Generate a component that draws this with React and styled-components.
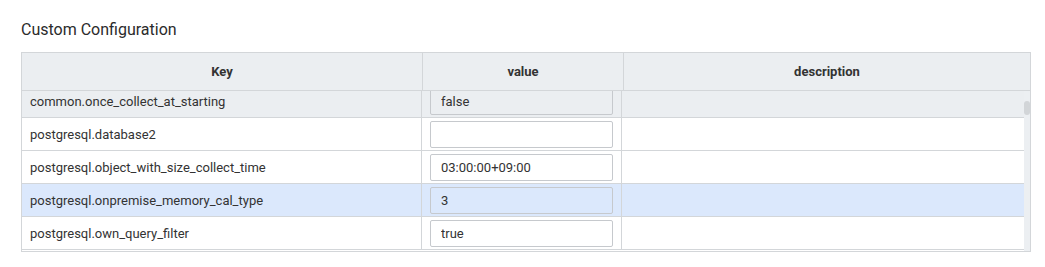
import React from 'react';
import styled, { createGlobalStyle } from 'styled-components';

const GlobalStyle = createGlobalStyle`
  body {
    margin: 0;
    background: #ffffff;
    font-family: Roboto, 'Liberation Sans', sans-serif;
    color: #333333;
  }
`;

const Page = styled.div`
  padding: 20px 15px 0 21px;
`;

const Title = styled.h3`
  margin: 0 0 13px;
  font-size: 16px;
  line-height: 19px;
  font-weight: 400;
  color: #2b2b2b;
`;

const Table = styled.div`
  width: 1008px;
  border: 1px solid #d3d6d9;
  background: #ffffff;
`;

const HeaderRow = styled.div`
  display: flex;
  height: 37px;
  background: #ebeef1;
  border-bottom: 1px solid #d3d6d9;
`;

const HeaderCell = styled.div`
  width: ${p => (p.$w ? `${p.$w}px` : 'auto')};
  flex: ${p => (p.$w ? 'none' : '1')};
  display: flex;
  align-items: center;
  justify-content: center;
  font-size: 13px;
  font-weight: 700;
  color: #333333;
  border-right: ${p => (p.$last ? 'none' : '1px solid #d3d6d9')};
`;

const Body = styled.div`
  display: flex;
  height: 160px;
  overflow: hidden;
`;

const Rows = styled.div`
  flex: 1;
  min-width: 0;
  overflow: hidden;
  background: #ffffff;
`;

const RowsInner = styled.div`
  margin-top: -6px;
`;

const Row = styled.div`
  display: flex;
  height: 32px;
  border-bottom: 1px solid #d3d6d9;
  background: ${p => p.$bg || '#ffffff'};
`;

const Cell = styled.div`
  width: ${p => (p.$w ? `${p.$w}px` : 'auto')};
  flex: ${p => (p.$w ? 'none' : '1')};
  display: flex;
  align-items: center;
  padding-left: ${p => p.$pl || 0}px;
  box-sizing: border-box;
  font-size: 13px;
  color: #333333;
  white-space: nowrap;
  border-right: ${p => (p.$last ? 'none' : '1px solid #d3d6d9')};
`;

const ValueInput = styled.input`
  width: 183px;
  height: 27px;
  box-sizing: border-box;
  padding: 0 10px;
  border: 1px solid #c6c9cd;
  border-radius: 2px;
  background: transparent;
  font-family: Roboto, 'Liberation Sans', sans-serif;
  font-size: 13px;
  color: #333333;
  outline: none;
`;

const ScrollTrack = styled.div`
  width: 6px;
  background: #eceff2;
  display: flex;
  flex-direction: column;
  align-items: center;
`;

const ScrollThumb = styled.div`
  width: 6px;
  height: 14px;
  margin-top: 10px;
  border-radius: 3px;
  background: #d2d5d8;
`;

const rows = [
  { key: 'common.once_collect_at_starting', value: 'false', bg: '#ebeef1' },
  { key: 'postgresql.database2', value: '' },
  { key: 'postgresql.object_with_size_collect_time', value: '03:00:00+09:00' },
  { key: 'postgresql.onpremise_memory_cal_type', value: '3', bg: '#dbe8fc' },
  { key: 'postgresql.own_query_filter', value: 'true' },
];

export default function App() {
  return (
    <Page>
      <GlobalStyle />
      <Title>Custom Configuration</Title>
      <Table>
        <HeaderRow>
          <HeaderCell $w={400}>Key</HeaderCell>
          <HeaderCell $w={200}>value</HeaderCell>
          <HeaderCell $last>description</HeaderCell>
        </HeaderRow>
        <Body>
          <Rows>
            <RowsInner>
              {rows.map(r => (
                <Row key={r.key} $bg={r.bg}>
                  <Cell $w={400} $pl={8}>{r.key}</Cell>
                  <Cell $w={200} $pl={8}>
                    <ValueInput defaultValue={r.value} />
                  </Cell>
                  <Cell $last />
                </Row>
              ))}
            </RowsInner>
          </Rows>
          <ScrollTrack>
            <ScrollThumb />
          </ScrollTrack>
        </Body>
      </Table>
    </Page>
  );
}
